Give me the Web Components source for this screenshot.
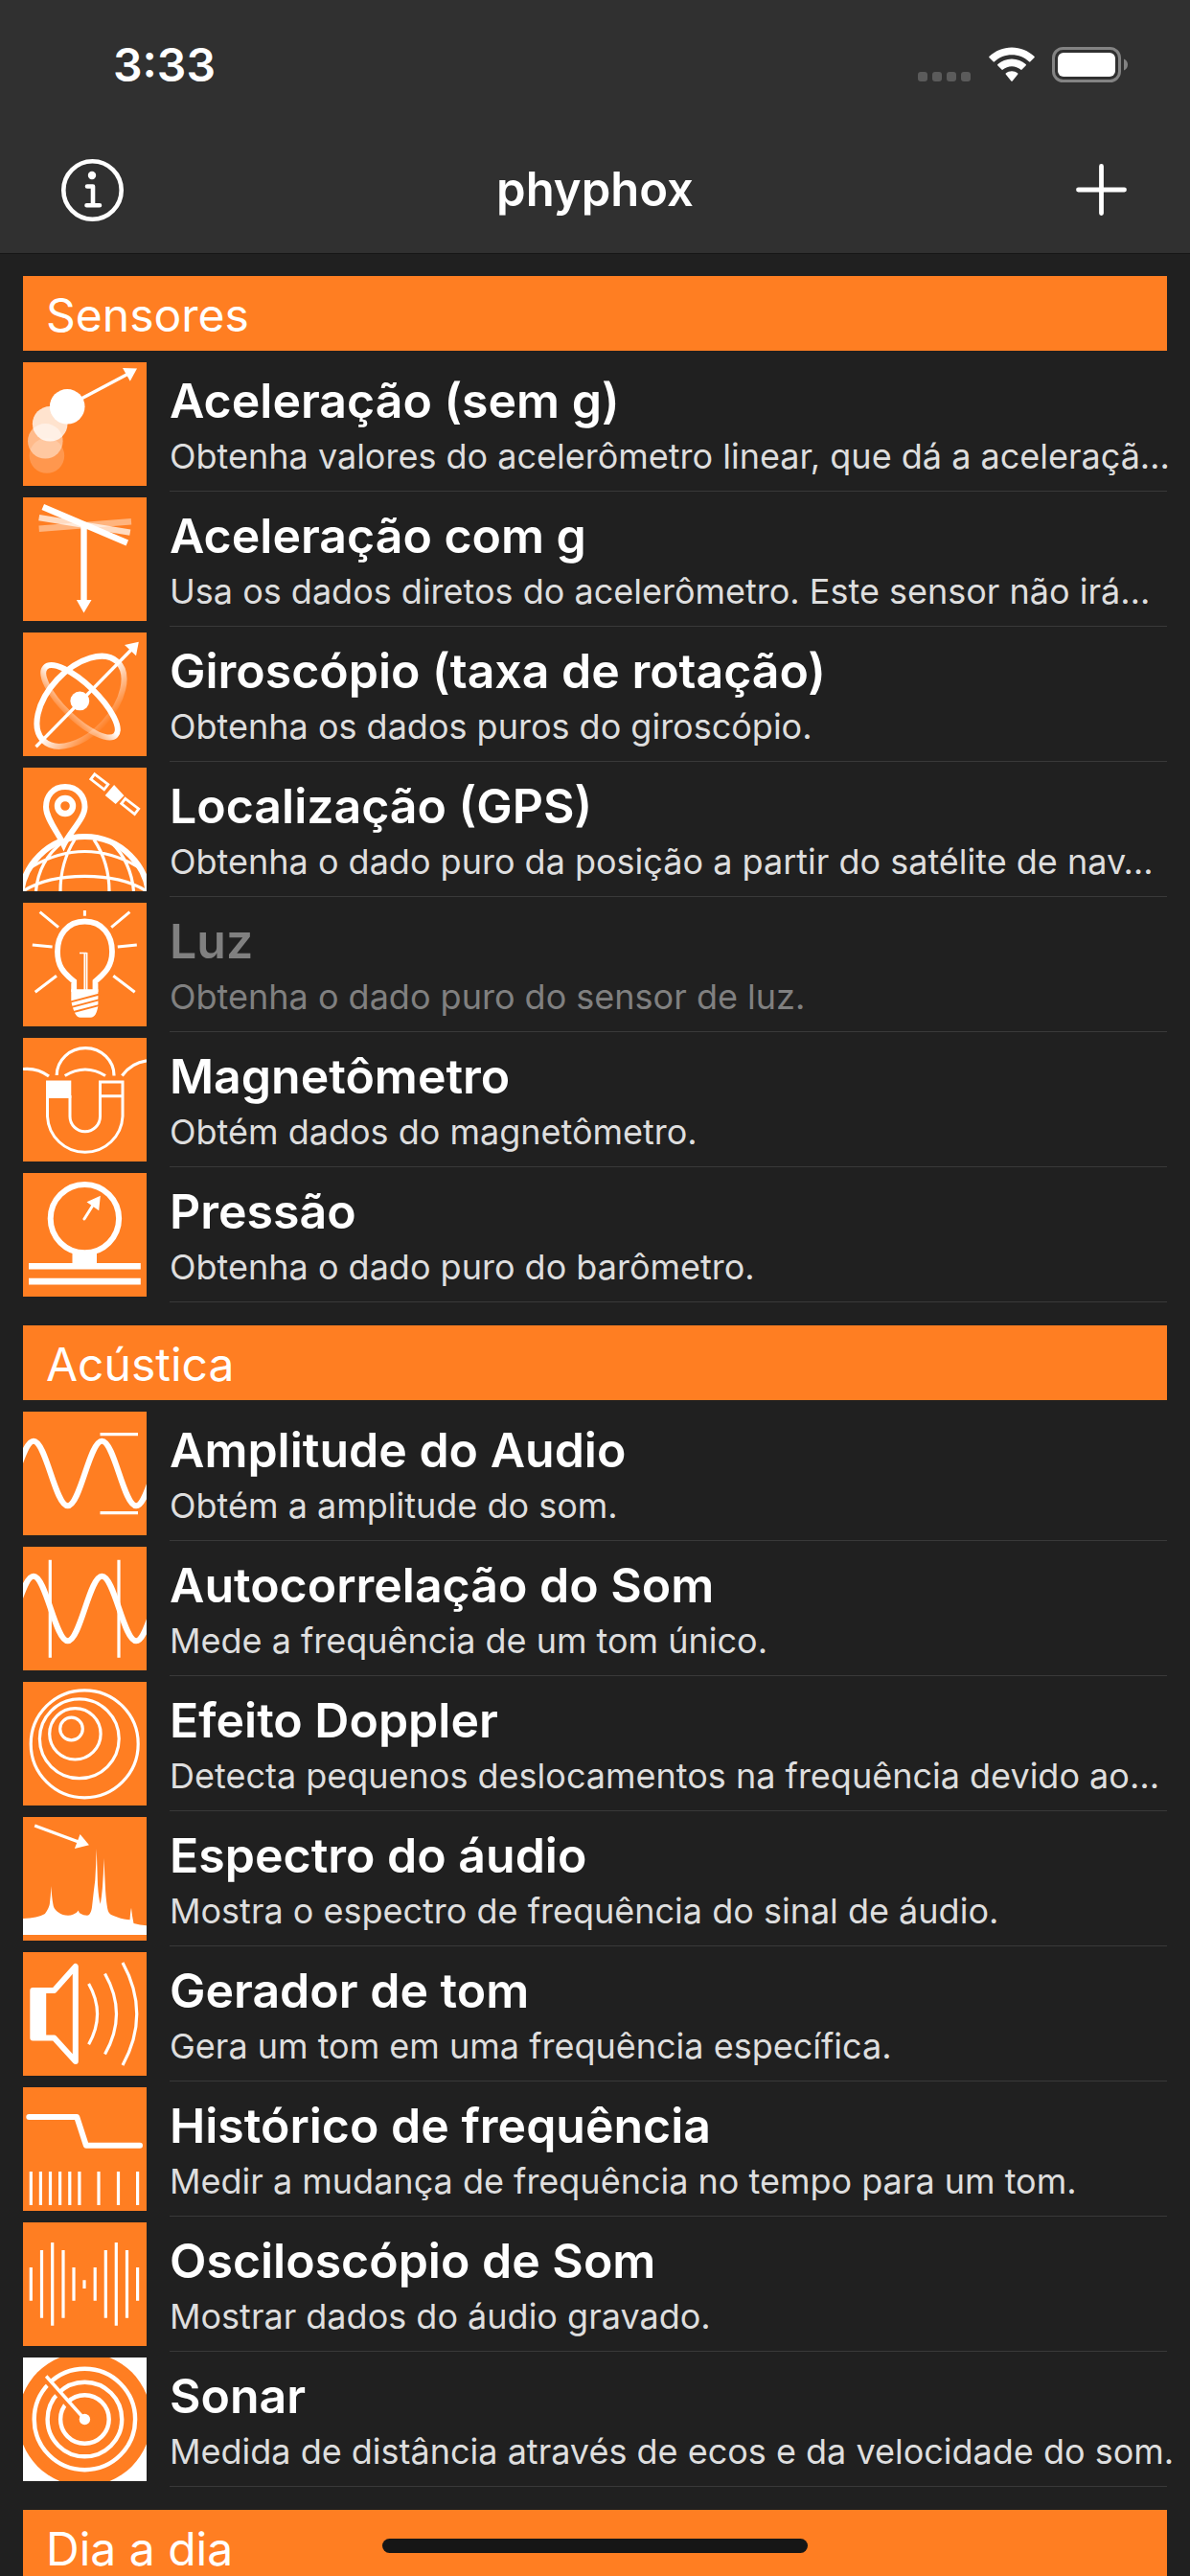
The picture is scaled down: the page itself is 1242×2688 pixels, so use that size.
<!DOCTYPE html>
<html lang="pt">
<head>
<meta charset="utf-8">
<meta name="viewport" content="width=device-width, initial-scale=1">
<title>phyphox</title>
<style>
  html, body { height: 100%; margin: 0; }
  body {
    background: #202020;
    color: #fff;
    font-family: Inter, "Liberation Sans", sans-serif;
    overflow: hidden;
    --accent: #ff7e22;
    --bar: #303030;
    --page: #202020;
    --muted: #808080;
  }
</style>
</head>
<body>
<phyphox-app>
  <status-bar slot="top" time="3:33"></status-bar>
  <nav-bar slot="top">phyphox</nav-bar>

  <experiment-section heading="Sensores">
    <experiment-row icon="accel"><span slot="title">Aceleração (sem g)</span>Obtenha valores do acelerômetro linear, que dá a aceleraçã…</experiment-row>
    <experiment-row icon="gravity"><span slot="title">Aceleração com g</span>Usa os dados diretos do acelerômetro. Este sensor não irá…</experiment-row>
    <experiment-row icon="gyro"><span slot="title">Giroscópio (taxa de rotação)</span>Obtenha os dados puros do giroscópio.</experiment-row>
    <experiment-row icon="gps"><span slot="title">Localização (GPS)</span>Obtenha o dado puro da posição a partir do satélite de nav…</experiment-row>
    <experiment-row icon="light" disabled><span slot="title">Luz</span>Obtenha o dado puro do sensor de luz.</experiment-row>
    <experiment-row icon="magnet"><span slot="title">Magnetômetro</span>Obtém dados do magnetômetro.</experiment-row>
    <experiment-row icon="pressure"><span slot="title">Pressão</span>Obtenha o dado puro do barômetro.</experiment-row>
  </experiment-section>

  <experiment-section heading="Acústica">
    <experiment-row icon="amplitude"><span slot="title">Amplitude do Audio</span>Obtém a amplitude do som.</experiment-row>
    <experiment-row icon="autocorrelation"><span slot="title">Autocorrelação do Som</span>Mede a frequência de um tom único.</experiment-row>
    <experiment-row icon="doppler"><span slot="title">Efeito Doppler</span>Detecta pequenos deslocamentos na frequência devido ao…</experiment-row>
    <experiment-row icon="spectrum"><span slot="title">Espectro do áudio</span>Mostra o espectro de frequência do sinal de áudio.</experiment-row>
    <experiment-row icon="tone"><span slot="title">Gerador de tom</span>Gera um tom em uma frequência específica.</experiment-row>
    <experiment-row icon="history"><span slot="title">Histórico de frequência</span>Medir a mudança de frequência no tempo para um tom.</experiment-row>
    <experiment-row icon="scope"><span slot="title">Osciloscópio de Som</span>Mostrar dados do áudio gravado.</experiment-row>
    <experiment-row icon="sonar"><span slot="title">Sonar</span>Medida de distância através de ecos e da velocidade do som.</experiment-row>
  </experiment-section>

  <experiment-section heading="Dia a dia"></experiment-section>
</phyphox-app>

<script>
const SINE = 'M-24.7 98.3C-11.7 98.3-2 30.7 11 30.7S33.7 98.3 46.7 98.3 69.4 30.7 82.4 30.7s22.7 67.6 35.7 67.6 22.7-67.6 35.7-67.6';
const bars = list => list.map(([x, a, b]) => `M${x} ${a}V${b}`).join('');

/* Artwork of the experiment tiles, on a 129 x 129 grid. "l" is a stroked shape, "f" a filled one. */
const ICONS = {
  accel: `
    <circle class="f" cx="24.9" cy="97.5" r="18.3" opacity=".2"/>
    <circle class="f" cx="23.3" cy="82.3" r="18.3" opacity=".47"/>
    <circle class="f" cx="28.2" cy="64.3" r="18.3" opacity=".78"/>
    <circle class="f" cx="46.2" cy="46.3" r="18.3"/>
    <path class="l" stroke-width="3.4" d="M58 39.5L109 12.5"/>
    <path class="f" d="M119 6.6L104 6l7.800 13.800z"/>`,
  gravity: `
    <path class="l" stroke-width="6.4" opacity=".42" d="M16.700 32.700L113 25.200"/>
    <path class="l" stroke-width="6.4" opacity=".72" d="M16.700 21.200L111.800 36.600"/>
    <path class="l" stroke-width="6.4" d="M20.800 10L108.800 47.500M63.500 30V108"/>
    <path class="f" d="M55.900 107H71.500L63.500 120.500z"/>`,
  gyro: `
    <defs>
      <linearGradient id="a" gradientUnits="userSpaceOnUse" x1="60" y1="69" x2="60" y2="109"><stop stop-color="#fff"/><stop offset="1" stop-color="#fff" stop-opacity="0"/></linearGradient>
      <linearGradient id="b" gradientUnits="userSpaceOnUse" x1="60" y1="70" x2="60" y2="96"><stop stop-color="#fff"/><stop offset="1" stop-color="#fff" stop-opacity="0"/></linearGradient>
    </defs>
    <ellipse fill="none" stroke="url(#a)" stroke-width="6" cx="60" cy="71.800" rx="56.400" ry="33.200" transform="rotate(-47 60 71.800)"/>
    <ellipse fill="none" stroke="url(#b)" stroke-width="6" cx="60" cy="71.800" rx="51" ry="17.700" transform="rotate(-136 60 71.800) scale(1 -1) translate(0 -143.600)"/>
    <path class="l" stroke-width="3.4" d="M13.500 119.300L113 18"/>
    <path class="f" d="M120.800 9.700L106 13l12 11.300z"/>
    <circle class="f" cx="59.300" cy="71.400" r="9.900"/>`,
  gps: `
    <circle class="l" stroke-width="6" cx="64.500" cy="139" r="67"/>
    <path class="l" stroke-width="3.2" d="M9 103.500Q64.500 71.500 120 103.500M0 129Q24 113.300 64.500 113.300T129 129M13.500 129C15 110 24 91 42 77M39 129C39 108 44 91 54 75M90 129C90 108 84 90 74 75M115.500 129C114 110 106 91 92 78"/>
    <path d="M44 20C31 20 24 30 24 41c0 12 12 26 18.500 39.500C49 67 64.500 53 64.500 41 64.500 30 57 20 44 20z" fill="var(--accent)" stroke="#fff" stroke-width="6"/>
    <circle class="l" stroke-width="6.400" cx="44" cy="40" r="8"/>
    <path class="l" stroke-width="2.8" d="M74.800 6.800L88.800 17.500 84.700 22.800 70.800 12.100zM106.800 32.300L120.700 43 116.500 48.600 102.700 37.600z"/>
    <path class="f" d="M95.100 18l10.400 11.300-8.800 8.800-11-9z"/>`,
  light: `
    <path class="l" stroke-width="3" d="M64.400 8V13.700M17.600 9.700L37 25.700M111.400 9.700L92.200 25.700M9.800 44L30.600 46M118.800 44L98.800 46M35 76.300L12.700 93.300M94.300 76.300L116.700 93.300"/>
    <path class="l" stroke-width="5.800" d="M53.200 93V82C42 73 36 66 36 51 36 34 46 19.500 64.500 19.500S93 34 93 51c0 15-7 22-17.500 31V93"/>
    <path class="f" d="M50.300 90.300H78.400V108c-1.500 7-3 11.700-8 11.700H60c-5 0-6.500-5.700-8.500-11.700L50.300 103z"/>
    <path stroke="var(--accent)" stroke-width="1.900" fill="none" d="M49 103.700L80 95.500M49 109.400L80 101.200M49 115L80 106.800"/>
    <path class="l" stroke-width="1.700" d="M59 52.500H66.500M64.300 52V91M66.600 52V91"/>`,
  magnet: `
    <path class="l" stroke-width="3.200" d="M35.200 39A29.800 28.500 0 0 1 95 39.500M43.700 39.500Q65 26.500 86 39.500M0 32.500Q15 31 27 40M129 23.800Q113 26 103.400 39.500"/>
    <path class="l" stroke-width="3" d="M25.500 60V82A39.300 39.300 0 0 0 104 82V46H80.500V82A15.700 15.700 0 0 1 49 82V60M80.500 60.800H104"/>
    <path class="f" d="M24 44.500H50.300V63H24z"/>`,
  pressure: `
    <circle class="l" stroke-width="6" cx="64.400" cy="47.600" r="35.700"/>
    <path class="f" d="M51.500 81H77V95H51.500zM6 94H122.800V100.600H6zM6 109.800H122.800V116.400H6zM80.800 23.700L66.500 30.300 79.200 39.300z"/>
    <path class="l" stroke-width="3" stroke-linecap="round" d="M63.900 48L74 32"/>`,
  amplitude: `
    <path class="l" stroke-width="6" d="${SINE}"/>
    <path class="l" stroke-width="3.200" d="M80.500 23.600H120M80.500 105.600H120"/>`,
  autocorrelation: `
    <path class="l" stroke-width="6" d="${SINE}"/>
    <path class="l" stroke-width="3.200" d="M28.300 13.700V115.700M100 13.700V115.700"/>`,
  doppler: `
    <g class="l" stroke-width="3.200">
      <circle cx="64.200" cy="64.800" r="56"/><circle cx="58.800" cy="59.300" r="41.400"/>
      <circle cx="54.400" cy="54.300" r="26.700"/><circle cx="50.500" cy="49" r="11.800"/>
    </g>`,
  spectrum: `
    <path class="l" stroke-width="3.400" d="M12.200 9L58 26"/>
    <path class="f" d="M69 29.300L59.600 18 53.900 33z"/>
    <path class="f" d="M0 106C10 105.500 18 104 22.900 101 26 97 27.500 93 27.800 91Q29 82 29.400 72 30 84 31.400 91C32 96 35 98 37 99.500 40 102 43 102.700 47 102.700S54 101 55.500 100Q57 98.500 57.600 97.500 58.500 100 60 100.800C62 102 64 102.700 67 102.700S71.500 98 72 94L73.900 77 75.300 66Q76.300 50 76.700 33 77.400 52 78 71 79 86 80.800 90.700 82 84 82.900 74 84 60 84.500 43 85.300 62 86.100 77 87.500 96 89.400 99.300C91 102.500 95 103 98.400 104.500 103 106.300 108 107 111.600 107.300Q112 99 113 94.700 113.800 103 115.500 111 122 112.800 129 113.300V123H0z"/>`,
  tone: `
    <path class="l" stroke-width="6" stroke-linejoin="round" d="M10.300 40H32.500L54.800 15V114L32.500 89.500H10.300z"/>
    <path class="f" d="M9 39H24.200V91H9z"/>
    <path class="l" stroke-width="3.200" d="M68.600 33Q86.500 64.500 68.600 96.300M85.500 22.500Q109.500 64.500 85.500 106.500M104 11Q133.500 64.500 104 118"/>`,
  history: `
    <path class="l" stroke-width="6" stroke-linecap="round" stroke-linejoin="round" d="M6.300 31H56.200L65.900 60.800H122"/>
    <path class="l" stroke-width="3.200" d="${bars([8.300, 18.400, 28.500, 38.600, 48.800, 58.900, 79, 99.500, 119.600].map(x => [x, 88, 123]))}"/>`,
  scope: `
    <path class="l" stroke-width="3.200" d="${bars([[8.300, 47, 81.700], [19.500, 29, 99.700], [30.700, 21, 107.700], [42, 29, 99.700], [53, 47, 81.700], [64, 60.300, 69], [75.200, 47, 81.700], [86.300, 29, 99.700], [97.300, 21, 107.700], [108.500, 29, 99.700], [119.600, 47, 81.700]])}"/>`,
  sonar: `
    <path class="f" d="M0 0H129V129H0z"/>
    <circle cx="64.400" cy="64.500" r="69.500" fill="var(--accent)"/>
    <g class="l" stroke-width="4.400"><circle cx="64.400" cy="64.500" r="52.700"/><circle cx="64.400" cy="64.500" r="38.800"/><circle cx="64.400" cy="64.500" r="25.300"/></g>
    <path stroke="var(--accent)" stroke-width="4.600" d="M61.700 66.800L21 21"/>
    <path class="l" stroke-width="3.400" d="M64.400 64.500L24.200 19.500"/>
    <circle class="f" cx="64.400" cy="64.500" r="5.700"/>`
};

class View extends HTMLElement {
  constructor() { super(); this.attachShadow({ mode: 'open' }); }
  connectedCallback() { this.shadowRoot.innerHTML = this.render(); }
}

customElements.define('phyphox-app', class extends View {
  render() {
    return `<style>
      :host { display: flex; flex-direction: column; height: 100vh; overflow: hidden; }
      header { flex: none; background: var(--bar); border-bottom: 1px solid #161616; }
      main { flex: 1; min-height: 0; overflow: hidden; padding: 23px 24px 0; display: flex; flex-direction: column; gap: 24px; }
      .home { position: fixed; left: 0; right: 0; bottom: 24px; margin: 0 auto; width: 444px; height: 15px; border-radius: 8px; background: #161616; }
    </style>
    <header><slot name="top"></slot></header>
    <main><slot></slot></main>
    <div class="home"></div>`;
  }
});

customElements.define('status-bar', class extends View {
  render() {
    return `<style>
      :host { display: flex; align-items: center; justify-content: space-between; height: 132px; padding: 4px 64px 0 118px; box-sizing: border-box; }
      time { font-size: 48px; line-height: 60px; font-weight: 600; }
      .set { display: flex; align-items: center; gap: 18px; }
      svg { display: block; }
    </style>
    <time>${this.getAttribute('time')}</time>
    <div class="set">
      <svg width="56" height="38" viewBox="0 0 56 38" fill="#5b5b5b"><rect y="26" width="10" height="10" rx="3"/><rect x="15" y="26" width="10" height="10" rx="3"/><rect x="30" y="26" width="10" height="10" rx="3"/><rect x="45" y="26" width="10" height="10" rx="3"/></svg>
      <svg width="48" height="38" viewBox="0 0 48 38" fill="#fff">
        <path d="M24 .5C15 .5 6.800 4 .6 9.800a1 1 0 0 0 0 1.500l4 4a1 1 0 0 0 1.400 0C10.800 10.900 17.100 8.300 24 8.300s13.200 2.600 18 7a1 1 0 0 0 1.400 0l4-4a1 1 0 0 0 0-1.500C41.200 4 33 .5 24 .5z"/>
        <path d="M24 12.500c-5.600 0-10.700 2.100-14.600 5.500a1 1 0 0 0 0 1.500l4 4.100a1 1 0 0 0 1.400 0c2.500-2.100 5.700-3.400 9.200-3.400s6.700 1.300 9.200 3.400a1 1 0 0 0 1.400 0l4-4.100a1 1 0 0 0 0-1.500C34.700 14.600 29.600 12.500 24 12.500z"/>
        <path d="M24 25.200c-2.300 0-4.500.8-6.100 2.100a1 1 0 0 0 0 1.500l5.400 6.600a1 1 0 0 0 1.400 0l5.400-6.600a1 1 0 0 0 0-1.500C28.500 26 26.300 25.200 24 25.200z"/>
      </svg>
      <svg width="80" height="38" viewBox="0 0 80 38"><rect x="1.500" y="1.500" width="69" height="34" rx="10" fill="none" stroke="#838383" stroke-width="3"/><rect x="6" y="6" width="60" height="25" rx="6" fill="#fff"/><path d="M75 12.500c2.400 1 4 3.300 4 6s-1.600 5-4 6z" fill="#838383"/></svg>
    </div>`;
  }
});

customElements.define('nav-bar', class extends View {
  render() {
    return `<style>
      :host { display: flex; align-items: center; justify-content: space-between; height: 132px; padding: 0 60px; box-sizing: border-box; }
      h1 { margin: 0; font-size: 49px; line-height: 60px; font-weight: 600; }
      button { border: 0; padding: 0; margin: 0; background: none; color: inherit; width: 72px; height: 72px; }
      svg { display: block; fill: none; stroke: #fff; }
    </style>
    <button type="button" aria-label="Info"><svg width="72" height="72" viewBox="0 0 72 72"><circle cx="36.500" cy="36.500" r="30.200" stroke-width="4.600"/><circle cx="36" cy="21" r="4.200" fill="#fff" stroke="none"/><path stroke-width="4.600" stroke-linecap="round" stroke-linejoin="round" d="M31 32.500H37V52M30.500 52.200H44"/></svg></button>
    <h1><slot></slot></h1>
    <button type="button" aria-label="Adicionar"><svg width="72" height="72" viewBox="0 0 72 72"><path stroke-width="4.800" stroke-linecap="round" d="M39.500 11.400V60.600M15.500 36H63.500"/></svg></button>`;
  }
});

customElements.define('experiment-section', class extends View {
  render() {
    return `<style>
      :host { display: flex; flex-direction: column; gap: 6px; flex: none; }
      h2 { margin: 0; padding: 11px 24px 7px; background: var(--accent); font-size: 48px; line-height: 60px; font-weight: 400; }
    </style>
    <h2>${this.getAttribute('heading')}</h2>
    <div><slot></slot></div>`;
  }
});

customElements.define('experiment-row', class extends View {
  render() {
    const off = this.hasAttribute('disabled');
    return `<style>
      :host { display: block; }
      a { display: flex; gap: 24px; color: inherit; text-decoration: none; }
      svg { flex: none; display: block; width: 129px; height: 129px; margin: 6px 0; background: var(--accent); }
      .l { fill: none; stroke: #fff; }
      .f { fill: #fff; }
      .text { flex: 1; min-width: 0; display: flex; flex-direction: column; gap: 6px; padding-top: 16px; border-bottom: 1px solid #393939; white-space: nowrap; }
      strong { font-size: 50px; line-height: 60px; font-weight: 600; }
      .note { font-size: 36px; line-height: 44px; color: #dedede; }
      .off strong, .off .note { color: var(--muted); }
    </style>
    <a href="#${this.getAttribute('icon')}" class="${off ? 'off' : ''}"${off ? ' aria-disabled="true"' : ''}>
      <svg viewBox="0 0 129 129" aria-hidden="true">${ICONS[this.getAttribute('icon')]}</svg>
      <span class="text"><strong><slot name="title"></slot></strong><span class="note"><slot></slot></span></span>
    </a>`;
  }
});
</script>
</body>
</html>
